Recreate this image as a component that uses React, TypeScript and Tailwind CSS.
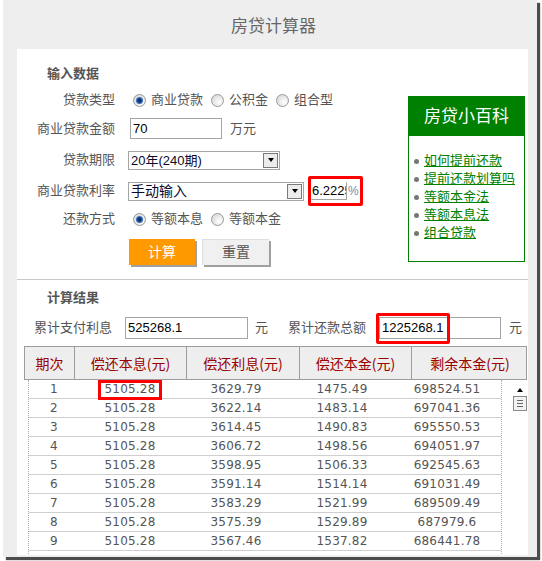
const ROWS: [number, string, string, string, string][] = [
  [1, '5105.28', '3629.79', '1475.49', '698524.51'],
  [2, '5105.28', '3622.14', '1483.14', '697041.36'],
  [3, '5105.28', '3614.45', '1490.83', '695550.53'],
  [4, '5105.28', '3606.72', '1498.56', '694051.97'],
  [5, '5105.28', '3598.95', '1506.33', '692545.63'],
  [6, '5105.28', '3591.14', '1514.14', '691031.49'],
  [7, '5105.28', '3583.29', '1521.99', '689509.49'],
  [8, '5105.28', '3575.39', '1529.89', '687979.6'],
  [9, '5105.28', '3567.46', '1537.82', '686441.78'],
];

const LINKS = ['如何提前还款', '提前还款划算吗', '等额本金法', '等额本息法', '组合贷款'];

const HEADERS = ['期次', '偿还本息(元)', '偿还利息(元)', '偿还本金(元)', '剩余本金(元)'];

function Radio({ checked, label }: { checked?: boolean; label: string }) {
  return (
    <span className="mr-[8px] flex items-center">
      <span className="flex h-[13px] w-[13px] items-center justify-center rounded-full border border-[#9a9a9a] bg-[radial-gradient(circle_at_65%_65%,#ffffff,#d0d0d0)]">
        {checked && (
          <span className="h-[7px] w-[7px] rounded-full bg-[radial-gradient(circle,#12306a_25%,#3f7fd6_75%)]" />
        )}
      </span>
      <span className="ml-[5px] text-[13px] leading-[16px] text-[#555]">{label}</span>
    </span>
  );
}

function Label({ children }: { children: string }) {
  return <span className="w-[98px] shrink-0 text-right text-[13px] leading-[16px] text-[#555]">{children}</span>;
}

function Select({ width, text, textSize }: { width: string; text: string; textSize: string }) {
  return (
    <span className={`flex h-[19px] items-center border border-[#a5a5a5] bg-white ${width}`}>
      <span className={`flex-1 pl-[2px] leading-[17px] text-[#0a0a30] ${textSize}`}>{text}</span>
      <span className="mr-px flex h-[15px] w-[15px] items-center justify-center border border-[#7a7a7a] bg-[#ececec]">
        <span className="h-0 w-0 border-x-[3.5px] border-t-[4px] border-x-transparent border-t-black" />
      </span>
    </span>
  );
}

export default function App() {
  return (
    <div className="h-[561px] w-[542px] overflow-hidden bg-white font-['Liberation_Sans','Noto_Sans_CJK_SC',sans-serif]">
      <div className="ml-[3px] flex h-[557px] w-[534px] flex-col bg-[#eeeeee] pb-[2px] pl-[14px] pr-[9px] shadow-[3px_3px_1px_rgba(0,0,0,0.7)]">
        <div className="flex h-[49px] items-center justify-center pl-[2px] font-['Noto_Sans_CJK_SC',sans-serif] text-[17px] text-[#666]">
          房贷计算器
        </div>

        <div className="h-[506px] overflow-hidden bg-white">
          {/* 输入数据 */}
          <div className="flex h-[231px] border-b border-[#c8c8c8]">
            <div className="w-[391px]">
              <div className="h-[37px] pl-[30px] pt-[17px] text-[13px] font-bold leading-[16px] text-[#555]">输入数据</div>

              <div className="flex h-[28px] items-center">
                <Label>贷款类型</Label>
                <span className="ml-[18px] flex items-center">
                  <Radio checked label="商业贷款" />
                  <Radio label="公积金" />
                  <Radio label="组合型" />
                </span>
              </div>

              <div className="flex h-[29px] items-center">
                <Label>商业贷款金额</Label>
                <span className="ml-[15px] flex h-[21px] w-[92px] items-center border border-[#a5a5a5] pl-[2px] text-[13px] text-black">
                  70
                </span>
                <span className="ml-[8px] text-[13px] text-[#555]">万元</span>
              </div>

              <div className="flex h-[34px] items-center">
                <Label>贷款期限</Label>
                <span className="ml-[13px]">
                  <Select width="w-[152px]" text="20年(240期)" textSize="text-[13px]" />
                </span>
              </div>

              <div className="flex h-[28px] items-center">
                <Label>商业贷款利率</Label>
                <span className="ml-[13px]">
                  <Select width="w-[176px]" text="手动输入" textSize="text-[14px]" />
                </span>
                <span className="relative ml-[7px] flex items-center">
                  <span className="flex h-[18px] w-[36px] items-center overflow-hidden border border-[#a5a5a5] border-l-transparent border-t-transparent text-[13px] leading-[16px] text-black">
                    6.2225
                  </span>
                  <span className="ml-px text-[12px] text-[#7a8aa0]">%</span>
                  <span className="absolute -bottom-[6px] -left-[3px] -right-[4px] -top-[6px] rounded-[2px] border-[3px] border-[#ff0000]" />
                </span>
              </div>

              <div className="flex h-[28px] items-center">
                <Label>还款方式</Label>
                <span className="ml-[18px] flex items-center">
                  <Radio checked label="等额本息" />
                  <Radio label="等额本金" />
                </span>
              </div>

              <div className="ml-[112px] mt-[6px] flex">
                <span className="flex h-[26px] w-[66px] items-center justify-center bg-[#ff9900] text-[14px] text-white shadow-[2px_2px_0_#a0a0a0]">
                  计算
                </span>
                <span className="ml-[7px] flex h-[26px] w-[67px] items-center justify-center border-l border-t border-[#dedede] bg-[#f0f0f0] text-[14px] text-[#555] shadow-[2px_2px_0_#a0a0a0]">
                  重置
                </span>
              </div>
            </div>

            <div className="mt-[47px] h-[166px] w-[117px] border border-[#008000]">
              <div className="flex h-[39px] items-center justify-center bg-[#008000] text-[17px] text-white">房贷小百科</div>
              <ul className="pt-[16px]">
                {LINKS.map((l) => (
                  <li key={l} className="flex h-[18px] items-center">
                    <span className="ml-[5px] h-[5px] w-[5px] rounded-full bg-[#777]" />
                    <span className="ml-[5px] text-[13px] leading-[16px] text-[#008000] underline">{l}</span>
                  </li>
                ))}
              </ul>
            </div>
          </div>

          {/* 计算结果 */}
          <div className="h-[10px]" />
          <div className="h-[16px] pl-[30px] text-[13px] font-bold leading-[16px] text-[#555]">计算结果</div>

          <div className="mt-[11px] flex h-[22px] items-center pl-[17px] text-[13px] text-[#555]">
            <span className="w-[91px]">累计支付利息</span>
            <span className="flex h-[22px] w-[123px] items-center border border-[#a5a5a5] pl-[2px] text-[13px] text-black">
              525268.1
            </span>
            <span className="w-[40px] pl-[7px]">元</span>
            <span className="w-[91px]">累计还款总额</span>
            <span className="relative flex h-[22px] w-[122px] items-center border border-[#a5a5a5] pl-[2px] text-[13px] text-black">
              1225268.1
              <span className="absolute -left-[4px] -top-[5px] h-[31px] w-[74px] rounded-[2px] border-[3px] border-[#ff0000]" />
            </span>
            <span className="pl-[8px]">元</span>
          </div>

          <div className="ml-[7px] mt-[7px] w-[503px]">
            <div className="grid h-[34px] grid-cols-[50px_112px_113px_112px_116px] border border-[#9c9c9c] bg-[#eeeeee]">
              {HEADERS.map((h, i) => (
                <div
                  key={h}
                  className={`flex items-center justify-center font-['Noto_Sans_CJK_SC',sans-serif] text-[14px] text-[#990000] ${
                    i < 4 ? 'border-r border-[#9c9c9c]' : ''
                  }`}
                >
                  {h}
                </div>
              ))}
            </div>

            <div className="flex">
              <div className="ml-[4px] h-[180px] w-[474px] border-x border-dotted border-[#b0b0b0]">
                {ROWS.map((r) => (
                  <div
                    key={r[0]}
                    className="grid h-[19px] grid-cols-[50px_102px_110px_102px_108px] border-b border-[#cfcfcf] font-['DejaVu_Sans',sans-serif] text-[12px] leading-[18px] tracking-[0.2px] text-[#555]"
                  >
                    <span className="text-center">{r[0]}</span>
                    <span className="relative text-center">
                      {r[1]}
                      {r[0] === 1 && (
                        <span className="absolute left-[19px] top-0 h-[20px] w-[64px] border-[3px] border-[#ff0000]" />
                      )}
                    </span>
                    <span className="text-center">{r[2]}</span>
                    <span className="text-center">{r[3]}</span>
                    <span className="text-center">{r[4]}</span>
                  </div>
                ))}
              </div>
              <div className="flex w-[25px] flex-col items-center pl-[11px]">
                <span className="mt-[8px] h-0 w-0 border-x-[3.5px] border-b-[4px] border-x-transparent border-b-black" />
                <span className="mt-[4px] flex h-[15px] w-[14px] flex-col items-center justify-center gap-[2px] border border-[#8a8a8a] bg-[#f2f2f2]">
                  <span className="h-px w-[6px] bg-[#666]" />
                  <span className="h-px w-[6px] bg-[#666]" />
                  <span className="h-px w-[6px] bg-[#666]" />
                </span>
              </div>
            </div>
          </div>
        </div>
      </div>
    </div>
  );
}
